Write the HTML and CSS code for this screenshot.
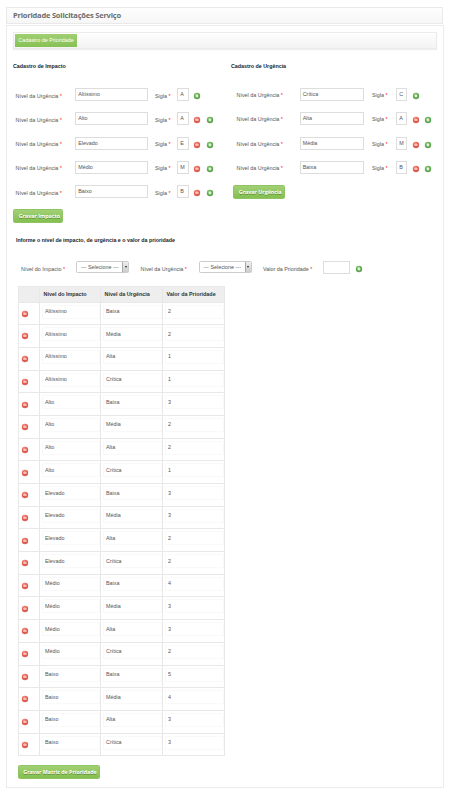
FILE: index.html
```html
<!DOCTYPE html>
<html lang="pt-BR">
<head>
<meta charset="utf-8">
<title>Prioridade Solicitações Serviço</title>
<link rel="stylesheet" href="styles.css">
</head>
<body>
<svg class="defs" width="0" height="0">
<defs>
<radialGradient id="red" cx=".4" cy=".3" r=".75"><stop offset="0" stop-color="#f39a8c"/><stop offset=".6" stop-color="#e2594c"/><stop offset="1" stop-color="#d4675c"/></radialGradient>
<radialGradient id="green" cx=".4" cy=".3" r=".75"><stop offset="0" stop-color="#95cd80"/><stop offset=".6" stop-color="#5aa84a"/><stop offset="1" stop-color="#64a158"/></radialGradient>
<symbol id="minus" viewBox="-2 -2 20 20"><circle cx="8" cy="8" r="8" fill="url(#red)"/><path d="M4 8h8" stroke="#fff" stroke-width="2.6"/></symbol>
<symbol id="plus" viewBox="-2 -2 20 20"><circle cx="8" cy="8" r="8" fill="url(#green)"/><path d="M4.5 8h7M8 4.5v7" stroke="#fff" stroke-width="2.6"/></symbol>
</defs>
</svg>
<header class="title"><h1>Prioridade Solicitações Serviço</h1></header>
<main class="panel">
<nav class="tabs"><a class="tab">Cadastro de Prioridade</a></nav>
<div class="forms">
<section class="impact">
<h2>Cadastro de Impacto</h2>
<div class="row"><label>Nível da Urgência <i>*</i></label><span class="field">Altíssimo</span><label class="sigla">Sigla <i>*</i></label><span class="field code">A</span><svg><use href="#plus"/></svg></div>
<div class="row"><label>Nível da Urgência <i>*</i></label><span class="field">Alto</span><label class="sigla">Sigla <i>*</i></label><span class="field code">A</span><svg><use href="#minus"/></svg><svg><use href="#plus"/></svg></div>
<div class="row"><label>Nível da Urgência <i>*</i></label><span class="field">Elevado</span><label class="sigla">Sigla <i>*</i></label><span class="field code">E</span><svg><use href="#minus"/></svg><svg><use href="#plus"/></svg></div>
<div class="row"><label>Nível da Urgência <i>*</i></label><span class="field">Médio</span><label class="sigla">Sigla <i>*</i></label><span class="field code">M</span><svg><use href="#minus"/></svg><svg><use href="#plus"/></svg></div>
<div class="row"><label>Nível da Urgência <i>*</i></label><span class="field">Baixo</span><label class="sigla">Sigla <i>*</i></label><span class="field code">B</span><svg><use href="#minus"/></svg><svg><use href="#plus"/></svg></div>
<a class="button save-impact">Gravar Impacto</a>
</section>
<section class="urgency">
<h2>Cadastro de Urgência</h2>
<div class="row"><label>Nível da Urgência <i>*</i></label><span class="field">Crítica</span><label class="sigla">Sigla <i>*</i></label><span class="field code">C</span><svg><use href="#plus"/></svg></div>
<div class="row"><label>Nível da Urgência <i>*</i></label><span class="field">Alta</span><label class="sigla">Sigla <i>*</i></label><span class="field code">A</span><svg><use href="#minus"/></svg><svg><use href="#plus"/></svg></div>
<div class="row"><label>Nível da Urgência <i>*</i></label><span class="field">Média</span><label class="sigla">Sigla <i>*</i></label><span class="field code">M</span><svg><use href="#minus"/></svg><svg><use href="#plus"/></svg></div>
<div class="row"><label>Nível da Urgência <i>*</i></label><span class="field">Baixa</span><label class="sigla">Sigla <i>*</i></label><span class="field code">B</span><svg><use href="#minus"/></svg><svg><use href="#plus"/></svg></div>
<a class="button save-urgency">Gravar Urgência</a>
</section>
</div>
<section class="matrix">
<h2>Informe o nível de impacto, de urgência e o valor da prioridade</h2>
<div class="filters">
<label>Nível do Impacto <i>*</i></label><span class="select"><span>--- Selecione ---</span><b></b></span>
<label>Nível da Urgência <i>*</i></label><span class="select"><span>--- Selecione ---</span><b></b></span>
<label>Valor da Prioridade <i>*</i></label><span class="field value"></span><svg><use href="#plus"/></svg>
</div>
<table>
<thead><tr><th></th><th>Nível do Impacto</th><th>Nível da Urgência</th><th>Valor da Prioridade</th></tr></thead>
<tbody>
<tr><td><svg><use href="#minus"/></svg></td><td><span>Altíssimo</span></td><td><span>Baixa</span></td><td><span>2</span></td></tr>
<tr><td><svg><use href="#minus"/></svg></td><td><span>Altíssimo</span></td><td><span>Média</span></td><td><span>2</span></td></tr>
<tr><td><svg><use href="#minus"/></svg></td><td><span>Altíssimo</span></td><td><span>Alta</span></td><td><span>1</span></td></tr>
<tr><td><svg><use href="#minus"/></svg></td><td><span>Altíssimo</span></td><td><span>Crítica</span></td><td><span>1</span></td></tr>
<tr><td><svg><use href="#minus"/></svg></td><td><span>Alto</span></td><td><span>Baixa</span></td><td><span>3</span></td></tr>
<tr><td><svg><use href="#minus"/></svg></td><td><span>Alto</span></td><td><span>Média</span></td><td><span>2</span></td></tr>
<tr><td><svg><use href="#minus"/></svg></td><td><span>Alto</span></td><td><span>Alta</span></td><td><span>2</span></td></tr>
<tr><td><svg><use href="#minus"/></svg></td><td><span>Alto</span></td><td><span>Crítica</span></td><td><span>1</span></td></tr>
<tr><td><svg><use href="#minus"/></svg></td><td><span>Elevado</span></td><td><span>Baixa</span></td><td><span>3</span></td></tr>
<tr><td><svg><use href="#minus"/></svg></td><td><span>Elevado</span></td><td><span>Média</span></td><td><span>3</span></td></tr>
<tr><td><svg><use href="#minus"/></svg></td><td><span>Elevado</span></td><td><span>Alta</span></td><td><span>2</span></td></tr>
<tr><td><svg><use href="#minus"/></svg></td><td><span>Elevado</span></td><td><span>Crítica</span></td><td><span>2</span></td></tr>
<tr><td><svg><use href="#minus"/></svg></td><td><span>Médio</span></td><td><span>Baixa</span></td><td><span>4</span></td></tr>
<tr><td><svg><use href="#minus"/></svg></td><td><span>Médio</span></td><td><span>Média</span></td><td><span>3</span></td></tr>
<tr><td><svg><use href="#minus"/></svg></td><td><span>Médio</span></td><td><span>Alta</span></td><td><span>3</span></td></tr>
<tr><td><svg><use href="#minus"/></svg></td><td><span>Médio</span></td><td><span>Crítica</span></td><td><span>2</span></td></tr>
<tr><td><svg><use href="#minus"/></svg></td><td><span>Baixo</span></td><td><span>Baixa</span></td><td><span>5</span></td></tr>
<tr><td><svg><use href="#minus"/></svg></td><td><span>Baixo</span></td><td><span>Média</span></td><td><span>4</span></td></tr>
<tr><td><svg><use href="#minus"/></svg></td><td><span>Baixo</span></td><td><span>Alta</span></td><td><span>3</span></td></tr>
<tr><td><svg><use href="#minus"/></svg></td><td><span>Baixo</span></td><td><span>Crítica</span></td><td><span>3</span></td></tr>
</tbody>
</table>
<a class="button save-matrix">Gravar Matriz de Prioridade</a>
</section>
</main>
</body>
</html>
```
FILE: styles.css
```css
* { box-sizing: border-box; }
body {
  margin: 0;
  padding: 7px 9px 0 6px;
  width: 452px;
  height: 795px;
  overflow: hidden;
  background: #fff;
  font: 5.4px/8px "Liberation Sans", Arial, sans-serif;
  color: #555;
}
.defs { position: absolute; }
svg { display: block; width: 8px; height: 8px; }
i { color: #f22; font-style: normal; }
h1, h2 { margin: 0; }

.title {
  height: 17px;
  border: 1px solid #e9e9e9;
  background: linear-gradient(#fefefe, #f6f6f6);
  padding-left: 6px;
}
h1 {
  font: bold 7.5px/15px "Open Sans", sans-serif;
  letter-spacing: -0.2px;
  color: #6c6c6c;
  white-space: nowrap;
}
.panel {
  margin-top: 1px;
  width: 438px;
  height: 763px;
  border: 1px solid #ececec;
  padding: 6px 6px 0;
}
.tabs {
  height: 17px;
  width: 424px;
  border: 1px solid #ececec;
  box-shadow: 0 1px 1px #eee;
  background: linear-gradient(#fefefe, #f3f3f3);
  padding: 1px;
}
.tab {
  display: block;
  width: 62px;
  height: 13px;
  line-height: 13px;
  text-align: center;
  color: #fff;
  background: linear-gradient(#a0cf73, #86c153);
  white-space: nowrap;
}
.forms { display: flex; height: 187px; padding-top: 13px; }
.impact { width: 218px; }
h2 {
  font-size: 5.33px;
  line-height: 8px;
  color: #222;
  white-space: nowrap;
}
h2 + .row { margin-top: 18px; }
.row {
  display: grid;
  grid-template-columns: 59.5px 72.5px 29.5px 11.5px 12.5px 12.5px;
  padding-left: 2.5px;
  height: 24.25px;
  align-items: start;
  white-space: nowrap;
}
.row > label { padding-top: 3.5px; }
.row > .sigla { padding-left: 7.5px; }
.field {
  display: block;
  height: 13px;
  line-height: 11px;
  border: 1px solid #ddd;
  padding-left: 2.2px;
  background: #fff;
}
.row svg { margin: 4px 0 0 4.5px; }
.urgency .row {
  grid-template-columns: 63px 64px 32.5px 11px 12.5px 12.5px;
  padding-left: 5.5px;
}
.urgency .row > label { padding-top: 3px; }
.urgency .row > .sigla { padding-left: 8.5px; }
.button {
  display: block;
  height: 14px;
  border: 1px solid #8ec461;
  border-radius: 1.5px;
  background: linear-gradient(#a2d075, #84bf50);
  color: #fff;
  font: bold 5.3px/13px "Open Sans", sans-serif;
  padding-left: 4.8px;
  text-shadow: 0 .5px .5px #5d8b38;
  white-space: nowrap;
}
.save-impact { width: 50px; margin-top: -.2px; }
.save-urgency { width: 52px; margin: 0 0 0 2px; }
.matrix { padding-left: 5px; }
.matrix h2 { margin-left: -2px; }
.filters {
  display: grid;
  grid-template-columns: 55px 53px 69.5px 53px 71.5px 27px 13px;
  padding-left: 3px;
  height: 24.5px;
  margin-top: 17px;
  white-space: nowrap;
}
.filters label { padding-top: 3.5px; }
.filters .select + label { padding-left: 11.5px; }
.filters > svg { margin: 3.7px 0 0 4.7px; }
.select {
  display: flex;
  height: 12px;
  line-height: 10px;
  border: 1px solid #ccc;
  border-radius: 1.5px;
}
.select span { flex: 1; padding-left: 4px; }
.select b {
  width: 6px;
  border-left: 1px solid #aaa;
  background: linear-gradient(#eee, #ccc);
  display: flex;
  align-items: center;
  justify-content: center;
}
.select b::after {
  content: "";
  border: 1.5px solid transparent;
  border-top: 2px solid #222;
  border-bottom: 0;
}
table {
  width: 207px;
  table-layout: fixed;
  border-spacing: 0;
  border-left: 1px solid #e8e8e8;
}
th, td { padding: 0; border: solid #e8e8e8; border-width: 0 1px 1px 0; }
th {
  height: 17px;
  border-top-width: 1px;
  background: #eee;
  color: #333;
  text-align: left;
  padding-left: 3.5px;
  white-space: nowrap;
}
th:first-child { width: 21px; }
th:nth-child(2) { width: 61px; }
th:nth-child(3) { width: 62px; }
td { height: 22.7px; vertical-align: top; }
td:first-child { padding: 7.3px 0 0 2px; }
td span {
  display: block;
  height: 14px;
  margin: 2px 0 0 2px;
  padding: 1.5px 0 0 2px;
  border: 1px solid #f9f9f9;
}
.save-matrix { width: 82.5px; margin: 8.5px 0 0 -.5px; }
```
